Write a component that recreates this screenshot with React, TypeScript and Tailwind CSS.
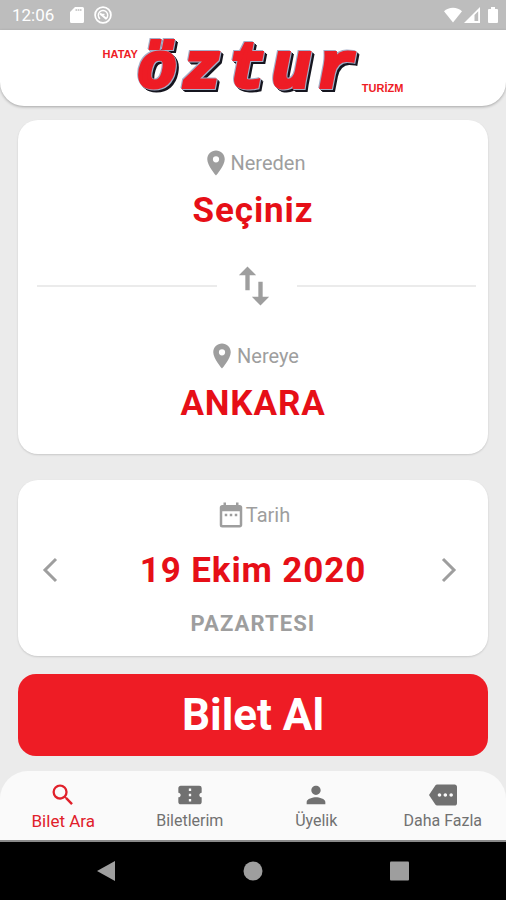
import type { ReactNode } from "react";
import {
  MdConfirmationNumber,
  MdDateRange,
  MdMore,
  MdPerson,
  MdPlace,
  MdSearch,
  MdSwapVert,
} from "react-icons/md";

function StatusBar() {
  return (
    <div className="flex h-[30px] items-center justify-between bg-[#bdbdbd] pr-2 pl-3 text-white">
      <div className="flex items-center gap-3">
        <span className="text-[17px] leading-5">12:06</span>
        <div className="flex items-center gap-2.5">
          <svg viewBox="0 0 14 16" className="ml-1 h-4 w-3.5" fill="currentColor" aria-hidden="true">
            <path d="M5 0h7.5A1.5 1.5 0 0 1 14 1.500v13a1.500 1.500 0 0 1-1.500 1.500h-11A1.500 1.500 0 0 1 0 14.500V5z" />
            <path d="M5.500 3h6.500" stroke="#bdbdbd" strokeWidth="1.500" strokeDasharray="1.600 .6" />
          </svg>
          <svg viewBox="0 0 18 18" className="h-[18px] w-[18px]" fill="none" stroke="currentColor" aria-hidden="true">
            <circle cx="9" cy="9" r="7.900" strokeWidth="1.800" />
            <path d="M6 12.800A4.700 4.700 0 1 1 12 12.800" strokeWidth="1.500" />
            <path d="M6 7.500 12.500 13" strokeWidth="2" />
            <path d="M6.500 8.500h4" strokeWidth="1.500" />
          </svg>
        </div>
      </div>
      <div className="flex items-center gap-0.5">
        <svg viewBox="0 0 18 16" className="h-4 w-[18px]" fill="currentColor" aria-hidden="true">
          <path d="M9 15.500 0 4.200C2.300 2 5.500.7 9 .7s6.700 1.300 9 3.500z" />
        </svg>
        <svg viewBox="0 0 16 16" className="h-4 w-4" fill="currentColor" aria-hidden="true">
          <path fillRule="evenodd" d="M16 0v16H0zM10.500 8v6h3.700V4.300z" />
        </svg>
        <svg viewBox="0 0 10 16" className="ml-1.5 h-4 w-2.5" fill="currentColor" aria-hidden="true">
          <path d="M3 0h4v2h2a1 1 0 0 1 1 1v12a1 1 0 0 1-1 1H1a1 1 0 0 1-1-1V3a1 1 0 0 1 1-1h2z" />
        </svg>
      </div>
    </div>
  );
}

function Logo() {
  return (
    <h1 className="flex justify-center font-['Liberation_Sans'] text-[11px] leading-3 font-bold text-[#ee1c25]">
      <span className="pt-[18px]">HATAY</span>
      <span className="pt-1 font-['Liberation_Mono'] text-[64px] leading-[72px] tracking-widest italic [-webkit-text-stroke:4px_#ee1c25] [filter:drop-shadow(-1px_-1px_0_#a3aec8)_drop-shadow(1px_1px_0_#a3aec8)_drop-shadow(2px_2px_0_#15151f)]">
        öztur
      </span>
      <span className="self-end pb-3">TURİZM</span>
    </h1>
  );
}

function Stop({ label, value }: { label: string; value: string }) {
  return (
    <button type="button" className="flex w-full flex-col items-center">
      <span className="flex items-center text-xl leading-[30px] text-[#9e9e9e]">
        <MdPlace size={30} />
        {label}
      </span>
      <span className="mt-3 text-[35px] leading-[42px] font-bold tracking-wide text-[#e60f17]">
        {value}
      </span>
    </button>
  );
}

function Chevron({ flip = false }: { flip?: boolean }) {
  return (
    <svg
      viewBox="0 0 16 26"
      className={flip ? "h-[26px] w-4 -scale-x-100" : "h-[26px] w-4"}
      fill="none"
      stroke="currentColor"
      strokeWidth="3"
      aria-hidden="true"
    >
      <path d="M14 2 3 13l11 11" />
    </svg>
  );
}

function Tab({ icon, label, active = false }: { icon: ReactNode; label: string; active?: boolean }) {
  return (
    <a
      href="#"
      aria-current={active ? "page" : undefined}
      className={
        active
          ? "flex flex-1 flex-col items-center text-[17px] text-[#e0202a]"
          : "flex flex-1 flex-col items-center text-base text-[#717171]"
      }
    >
      {icon}
      <span className="leading-6">{label}</span>
    </a>
  );
}

export default function App() {
  return (
    <div className="flex min-h-screen flex-col bg-[#ebebeb] font-[Roboto,sans-serif]">
      <StatusBar />
      <header className="h-[76px] rounded-b-[24px] bg-white shadow-[0_1px_3px_rgba(0,0,0,0.3)]">
        <Logo />
      </header>

      <main className="flex flex-1 flex-col px-[18px] pt-3.5 pb-[15px]">
        <section className="rounded-[20px] bg-white px-3 pt-7 pb-[29px] shadow-[0_1px_2px_rgba(0,0,0,0.15)]">
          <Stop label="Nereden" value="Seçiniz" />
          <div className="flex items-center pt-7 pb-[29px] pl-[7px]">
            <div className="h-0.5 flex-1 bg-[#ebebeb]" />
            <button type="button" aria-label="Değiştir" className="flex w-20 justify-center pr-1.5 text-[#9e9e9e]">
              <MdSwapVert size={52} />
            </button>
            <div className="h-0.5 flex-1 bg-[#ebebeb]" />
          </div>
          <Stop label="Nereye" value="ANKARA" />
        </section>

        <section className="mt-[26px] flex items-center justify-between rounded-[20px] bg-white px-6 pt-5 pb-[17px] shadow-[0_1px_2px_rgba(0,0,0,0.15)]">
          <button type="button" aria-label="Önceki gün" className="flex w-[23px] text-[#9e9e9e]">
            <Chevron />
          </button>
          <button type="button" className="flex flex-col items-center text-[#9e9e9e]">
            <span className="flex items-center text-xl leading-[30px]">
              <MdDateRange size={30} />
              Tarih
            </span>
            <span className="mt-5 text-[35px] leading-[42px] font-bold tracking-wide text-[#e60f17]">
              19 Ekim 2020
            </span>
            <span className="mt-[17px] text-[22px] leading-[30px] font-bold tracking-wider">
              PAZARTESI
            </span>
          </button>
          <button type="button" aria-label="Sonraki gün" className="flex w-[23px] text-[#9e9e9e]">
            <Chevron flip />
          </button>
        </section>

        <button
          type="button"
          className="mt-[18px] h-[82px] rounded-[18px] bg-[#ee1c25] text-[44px] font-bold text-white"
        >
          Bilet Al
        </button>
      </main>

      <nav className="flex h-[71px] rounded-t-[28px] border-b-2 border-[#8a8a8a] bg-[#fafafa] pt-2.5">
        <Tab icon={<MdSearch size={28} />} label="Bilet Ara" active />
        <Tab icon={<MdConfirmationNumber size={28} />} label="Biletlerim" />
        <Tab icon={<MdPerson size={28} />} label="Üyelik" />
        <Tab icon={<MdMore size={28} />} label="Daha Fazla" />
      </nav>

      <div className="flex h-[58px] items-center justify-center gap-[107px] bg-black text-[#9e9e9e]">
        <button type="button" aria-label="Geri">
          <svg viewBox="0 0 40 20" className="h-5 w-10" fill="currentColor" aria-hidden="true">
            <path d="M11 10 29 0v20z" />
          </svg>
        </button>
        <button type="button" aria-label="Ana ekran">
          <svg viewBox="0 0 40 20" className="h-5 w-10" fill="currentColor" aria-hidden="true">
            <circle cx="20" cy="10" r="9.500" />
          </svg>
        </button>
        <button type="button" aria-label="Son uygulamalar">
          <svg viewBox="0 0 40 20" className="h-5 w-10" fill="currentColor" aria-hidden="true">
            <rect x="10" y=".5" width="19" height="19" rx="1" />
          </svg>
        </button>
      </div>
    </div>
  );
}
